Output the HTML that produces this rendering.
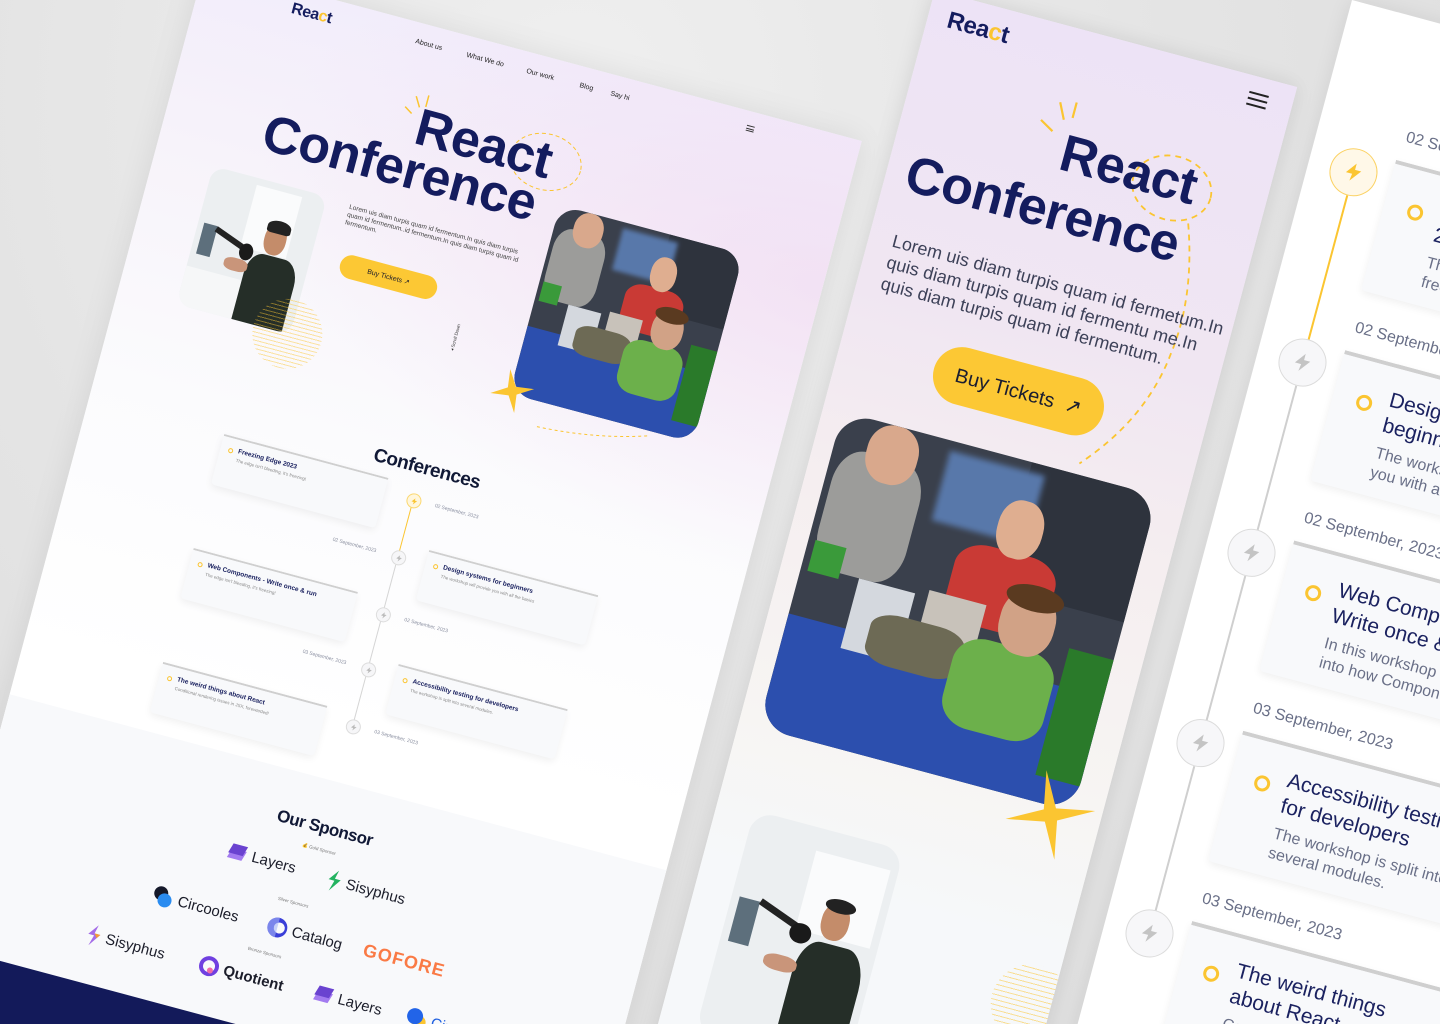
<!DOCTYPE html>
<html><head><meta charset="utf-8">
<style>
*{margin:0;padding:0;box-sizing:border-box}
html,body{width:1440px;height:1024px;overflow:hidden}
body{font-family:"Liberation Sans",sans-serif}
#wrap{position:absolute;left:0;top:0;width:1440px;height:1024px;overflow:hidden;background:radial-gradient(ellipse at 40% 10%,#efefef 0,#e4e4e4 50%,#dcdcdc 100%)}
.panel{position:absolute;transform-origin:0 0;transform:rotate(15deg);overflow:hidden}
.a{position:absolute}
.h{font-weight:bold;color:#141c5e;line-height:1;white-space:nowrap;letter-spacing:-0.5px}
.photo{position:absolute;overflow:hidden}
.photo div{position:absolute}
.crowd{background:#3a404c}
.speaker{background:#eceff1}
.btn{position:absolute;background:#fcc834;color:#1a1a2a;display:flex;align-items:center;justify-content:center;white-space:nowrap}
.card{position:absolute;background:#f8f9fb;border-top:2px solid #cfcfcf;box-shadow:0 3px 8px rgba(0,0,0,.06);border-radius:0 0 4px 4px}
.dot{position:absolute;border-radius:50%}
.ring{position:absolute;border-radius:50%;border:3px solid #fbc531}
.date{position:absolute;color:#8a8fa0;white-space:nowrap}
.tic{position:absolute;border-radius:50%;display:flex;align-items:center;justify-content:center}
.sp{position:absolute;display:flex;align-items:center;white-space:nowrap;color:#1b1d2a;font-weight:normal}
</style></head><body><div id="wrap">

<!-- LEFT DESKTOP PANEL -->
<div class="panel" style="left:205px;top:-35px;width:680px;height:1300px;background:linear-gradient(180deg,#f2edfb 0,#f7f3fa 180px,#fbfbfd 420px,#fff 700px);box-shadow:0 0 30px rgba(0,0,0,.08)">
  <div class="a" style="left:0;top:0;width:680px;height:500px;background:radial-gradient(ellipse at 100% 30%,rgba(240,215,240,.6),rgba(255,255,255,0) 60%)"></div>
  <div class="a" style="left:0;top:755px;width:680px;height:270px;background:#f8f9fb"></div>
  <div class="a" style="left:0;top:1015px;width:680px;height:300px;background:#131a5a"></div>

  <div class="a h" style="left:95px;top:12px;font-size:16px">Rea<span style="color:#fbc531">c</span>t</div>
  <div class="a" style="left:223px;top:16px;font-size:7px;color:#222;white-space:nowrap">About us</div>
  <div class="a" style="left:276px;top:16px;font-size:7px;color:#222;white-space:nowrap">What We do</div>
  <div class="a" style="left:338px;top:16px;font-size:7px;color:#222;white-space:nowrap">Our work</div>
  <div class="a" style="left:393px;top:16px;font-size:7px;color:#222;white-space:nowrap">Blog</div>
  <div class="a" style="left:425px;top:16px;font-size:7px;color:#222;white-space:nowrap">Say hi</div>
  <div class="a" style="left:565px;top:14px;width:8px;height:6px;border-top:1px solid #333;border-bottom:1px solid #333"><div class="a" style="left:0;top:2px;width:8px;height:1px;background:#333"></div></div>

  <svg class="a" style="left:220px;top:50px" width="200" height="110" viewBox="0 0 200 110">
    <path d="M10 35 L18 40 M18 22 L24 32 M30 18 L30 30" stroke="#fbc531" stroke-width="1.5" fill="none"/>
    <ellipse cx="160" cy="52" rx="36" ry="28" stroke="#fbc531" stroke-width="1" stroke-dasharray="4 3" fill="none"/>
  </svg>
  <div class="a h" style="left:246px;top:75px;font-size:52px">React</div>
  <div class="a h" style="left:100px;top:120px;font-size:52px">Conference</div>

  <div class="photo speaker" style="left:60px;top:192px;width:118px;height:143px;border-radius:14px">
    <div style="left:40%;top:5%;width:40%;height:45%;background:#fafbfc"></div>
    <div style="left:5%;top:40%;width:12%;height:22%;background:#5d6f7c"></div>
    <div style="left:15%;top:45%;width:35%;height:4%;background:#222;transform:rotate(20deg)"></div>
    <div style="left:40%;top:46%;width:12%;height:12%;background:#1a1a1a;border-radius:50%"></div>
    <div style="left:0;top:72%;width:55%;height:30%;background:#f6f7f8"></div>
    <div style="left:48%;top:50%;width:44%;height:55%;background:#252e28;border-radius:30% 30% 0 0"></div>
    <div style="left:58%;top:28%;width:18%;height:22%;background:#c48c6a;border-radius:45%"></div>
    <div style="left:58%;top:25%;width:20%;height:9%;background:#222;border-radius:50% 50% 20% 20%"></div>
    <div style="left:30%;top:58%;width:20%;height:9%;background:#c9957a;border-radius:40%"></div>
  </div>
  <div class="a" style="left:140px;top:300px;width:70px;height:70px;border-radius:50%;background:repeating-linear-gradient(0deg,rgba(251,197,49,.45) 0 1px,transparent 1px 4px);z-index:0"></div>

  <div class="a" style="left:202px;top:193px;width:190px;font-size:6.5px;line-height:8px;color:#444">Lorem uis diam turpis quam id fermentum.In quis diam turpis quam id fermentum..id fermentum.In quis diam turpis quam id fermentum.</div>
  <div class="btn" style="left:208px;top:242px;width:100px;height:24px;border-radius:12px;font-size:7px">Buy Tickets ↗</div>
  <div class="a" style="left:325px;top:292px;font-size:4.5px;color:#333;transform:rotate(-90deg);white-space:nowrap">◂ Scroll Down</div>

  <div class="photo crowd" style="left:405px;top:140px;width:190px;height:195px;border-radius:22px">
    <div style="left:60%;top:0;width:40%;height:40%;background:#2e333d"></div>
    <div style="left:35%;top:3%;width:30%;height:22%;background:#5878aa;filter:blur(2px)"></div>
    <div style="left:2%;top:10%;width:28%;height:38%;background:#9c9c9a;border-radius:30%"></div>
    <div style="left:10%;top:0;width:16%;height:18%;background:#d9a88c;border-radius:45%"></div>
    <div style="left:45%;top:28%;width:32%;height:25%;background:#c93a35;border-radius:30%"></div>
    <div style="left:55%;top:12%;width:14%;height:18%;background:#dfae90;border-radius:45%"></div>
    <div style="left:40%;top:46%;width:18%;height:14%;background:#c8c2ba"></div>
    <div style="left:0;top:64%;width:100%;height:40%;background:#2c4fae"></div>
    <div style="left:18%;top:48%;width:18%;height:22%;background:#d4d8de"></div>
    <div style="left:25%;top:56%;width:30%;height:16%;background:#6d6a55;border-radius:30%"></div>
    <div style="left:52%;top:56%;width:32%;height:28%;background:#6cb04b;border-radius:30%"></div>
    <div style="left:63%;top:38%;width:17%;height:20%;background:#d1a286;border-radius:45%"></div>
    <div style="left:63%;top:36%;width:18%;height:8%;background:#5a3a20;border-radius:50%"></div>
    <div style="left:86%;top:52%;width:14%;height:40%;background:#2a7a2a"></div>
    <div style="left:2%;top:40%;width:10%;height:10%;background:#3a9a3a"></div>
  </div>
  <svg class="a" style="left:385px;top:310px" width="44" height="44" viewBox="0 0 44 44"><path d="M22 0 L26 18 L44 22 L26 26 L22 44 L18 26 L0 22 L18 18 Z" fill="#fbc531" transform="rotate(-20 22 22)"/></svg>
  <svg class="a" style="left:440px;top:335px" width="120" height="30"><path d="M0 25 Q60 22 110 5" stroke="#fbc531" stroke-dasharray="3 3" fill="none"/></svg>

  <div class="a h" style="left:290px;top:420px;font-size:19px;color:#111936">Conferences</div>
  <div class="a" style="left:339px;top:470px;width:1px;height:50px;background:#fbc531"></div>
  <div class="a" style="left:339px;top:530px;width:1px;height:165px;background:#d5d5d5"></div>
  <div class="tic" style="left:333px;top:456px;width:15px;height:15px;background:#fff6dc;border:1px solid #fbd870"><svg width="8" height="8" viewBox="0 0 24 24"><path d="M13 2 4 14h7l-1 8 10-13h-7z" fill="#fbc531"/></svg></div>
  <div class="tic" style="left:333px;top:515px;width:15px;height:15px;background:#f6f6f8;border:1px solid #ddd"><svg width="8" height="8" viewBox="0 0 24 24"><path d="M13 2 4 14h7l-1 8 10-13h-7z" fill="#bbb"/></svg></div>
  <div class="tic" style="left:333px;top:574px;width:15px;height:15px;background:#f6f6f8;border:1px solid #ddd"><svg width="8" height="8" viewBox="0 0 24 24"><path d="M13 2 4 14h7l-1 8 10-13h-7z" fill="#bbb"/></svg></div>
  <div class="tic" style="left:333px;top:631px;width:15px;height:15px;background:#f6f6f8;border:1px solid #ddd"><svg width="8" height="8" viewBox="0 0 24 24"><path d="M13 2 4 14h7l-1 8 10-13h-7z" fill="#bbb"/></svg></div>
  <div class="tic" style="left:333px;top:690px;width:15px;height:15px;background:#f6f6f8;border:1px solid #ddd"><svg width="8" height="8" viewBox="0 0 24 24"><path d="M13 2 4 14h7l-1 8 10-13h-7z" fill="#bbb"/></svg></div>

  <div class="date" style="left:362px;top:460px;font-size:5px">02 September, 2023</div>
  <div class="date" style="left:272px;top:519px;font-size:5px">02 September, 2023</div>
  <div class="date" style="left:362px;top:578px;font-size:5px">02 September, 2023</div>
  <div class="date" style="left:272px;top:635px;font-size:5px">03 September, 2023</div>
  <div class="date" style="left:362px;top:694px;font-size:5px">03 September, 2023</div>

  <div class="card" style="left:140px;top:448px;width:170px;height:52px"><div class="dot" style="left:8px;top:10px;width:5px;height:5px;border:1.5px solid #fbc531"></div><div class="a" style="left:18px;top:8px;font-size:6.5px;font-weight:bold;color:#1b2260;white-space:nowrap">Freezing Edge 2023</div><div class="a" style="left:18px;top:18px;font-size:4.5px;color:#888;white-space:nowrap">The edge isn't bleeding, it's freezing!</div></div>
  <div class="card" style="left:368px;top:507px;width:175px;height:52px"><div class="dot" style="left:8px;top:10px;width:5px;height:5px;border:1.5px solid #fbc531"></div><div class="a" style="left:18px;top:8px;font-size:6.5px;font-weight:bold;color:#1b2260;white-space:nowrap">Design systems for beginners</div><div class="a" style="left:18px;top:18px;font-size:4.5px;color:#888;white-space:nowrap">The workshop will provide you with all the basics</div></div>
  <div class="card" style="left:140px;top:566px;width:170px;height:52px"><div class="dot" style="left:8px;top:10px;width:5px;height:5px;border:1.5px solid #fbc531"></div><div class="a" style="left:18px;top:8px;font-size:6.5px;font-weight:bold;color:#1b2260;white-space:nowrap">Web Components - Write once &amp; run</div><div class="a" style="left:18px;top:18px;font-size:4.5px;color:#888;white-space:nowrap">The edge isn't bleeding, it's freezing!</div></div>
  <div class="card" style="left:368px;top:625px;width:175px;height:52px"><div class="dot" style="left:8px;top:10px;width:5px;height:5px;border:1.5px solid #fbc531"></div><div class="a" style="left:18px;top:8px;font-size:6.5px;font-weight:bold;color:#1b2260;white-space:nowrap">Accessibility testing for developers</div><div class="a" style="left:18px;top:18px;font-size:4.5px;color:#888;white-space:nowrap">The workshop is split into several modules.</div></div>
  <div class="card" style="left:140px;top:684px;width:170px;height:52px"><div class="dot" style="left:8px;top:10px;width:5px;height:5px;border:1.5px solid #fbc531"></div><div class="a" style="left:18px;top:8px;font-size:6.5px;font-weight:bold;color:#1b2260;white-space:nowrap">The weird things about React</div><div class="a" style="left:18px;top:18px;font-size:4.5px;color:#888;white-space:nowrap">Conditional rendering issues in JSX, forewarded!</div></div>

  <div class="a h" style="left:290px;top:794px;font-size:17px;color:#111936">Our Sponsor</div>
  <div class="a" style="left:322px;top:822px;font-size:4.5px;color:#777;white-space:nowrap">💰 Gold Sponsor</div>
  <div class="a" style="left:312px;top:880px;font-size:4.5px;color:#777;white-space:nowrap">Silver Sponsors</div>
  <div class="a" style="left:296px;top:936px;font-size:4.5px;color:#777;white-space:nowrap">Bronze Sponsors</div>

  <div class="sp" style="left:250px;top:840px;font-size:15px"><svg width="22" height="18" viewBox="0 0 22 18"><path d="M5 6 L20 6 L17 16 L2 16Z" fill="#a37bf0"/><path d="M5 1 L20 1 L17 11 L2 11Z" fill="#6a43d0"/></svg>&nbsp;Layers</div>
  <div class="sp" style="left:354px;top:840px;font-size:15px"><svg width="16" height="22" viewBox="0 0 16 22"><path d="M10 0 L2 11 H8 L5 22 L14 9 H8 Z" fill="#22b360"/></svg>&nbsp;Sisyphus</div>
  <div class="sp" style="left:190px;top:900px;font-size:15px"><svg width="22" height="22" viewBox="0 0 22 22"><circle cx="8" cy="8" r="7" fill="#15192a"/><circle cx="13" cy="14" r="7" fill="#2a8cf0"/></svg>&nbsp;Circooles</div>
  <div class="sp" style="left:308px;top:900px;font-size:15px"><svg width="22" height="22" viewBox="0 0 22 22"><circle cx="11" cy="11" r="10" fill="#3a3fd8"/><circle cx="13" cy="11" r="5.5" fill="#f8f9fb"/><path d="M11 1 A10 10 0 0 0 11 21 Z" fill="#a6b6f8" opacity=".6"/></svg>&nbsp;Catalog</div>
  <div class="sp" style="left:408px;top:900px;font-size:18px;color:#fa7a45;letter-spacing:1px;font-weight:bold">GOFORE</div>
  <div class="sp" style="left:136px;top:955px;font-size:15px"><svg width="16" height="22" viewBox="0 0 16 22"><path d="M10 0 L2 11 H8 L5 22 L14 9 H8 Z" fill="#a46ce8"/><path d="M8 9 H14 L11 13 Z" fill="#f59a30"/></svg>&nbsp;Sisyphus</div>
  <div class="sp" style="left:252px;top:955px;font-size:15px;font-weight:bold"><svg width="22" height="22" viewBox="0 0 22 22"><circle cx="11" cy="11" r="8" fill="none" stroke="#7040e0" stroke-width="4"/><circle cx="13" cy="15" r="3" fill="#f06aa8"/></svg>&nbsp;Quotient</div>
  <div class="sp" style="left:370px;top:955px;font-size:15px"><svg width="22" height="18" viewBox="0 0 22 18"><path d="M5 6 L20 6 L17 16 L2 16Z" fill="#a37bf0"/><path d="M5 1 L20 1 L17 11 L2 11Z" fill="#6a43d0"/></svg>&nbsp;Layers</div>
  <div class="sp" style="left:466px;top:952px;font-size:15px;color:#2060e0"><svg width="22" height="22" viewBox="0 0 22 22"><circle cx="14" cy="14" r="7" fill="#fbc531"/><circle cx="9" cy="9" r="8" fill="#2264e8"/></svg>&nbsp;Circle</div>
</div>

<!-- MIDDLE MOBILE PANEL -->
<div class="panel" style="left:935px;top:-10px;width:375px;height:1200px;background:linear-gradient(180deg,#ede3f6 0,#f0e6f2 300px,#f5eef0 500px,#f7f5f3 750px,#f6f8fa 900px);box-shadow:0 0 20px rgba(0,0,0,.1)">
  <div class="a h" style="left:20px;top:14px;font-size:24px">Rea<span style="color:#fbc531">c</span>t</div>
  <div class="a" style="left:330px;top:16px;width:20px;height:14px;border-top:2px solid #222;border-bottom:2px solid #222"><div class="a" style="left:0;top:4px;width:20px;height:2px;background:#222"></div></div>
  <svg class="a" style="left:0;top:60px" width="375" height="400" viewBox="0 0 375 400">
    <path d="M136 38 L150 46 M150 16 L158 32 M166 12 L166 28" stroke="#fbc531" stroke-width="2.2" fill="none"/>
    <ellipse cx="280" cy="70" rx="40" ry="32" stroke="#fbc531" stroke-width="1.8" stroke-dasharray="6 5" fill="none"/>
    <path d="M305 100 Q330 170 322 230 Q315 300 262 360" stroke="#fbc531" stroke-width="1.8" stroke-dasharray="6 5" fill="none"/>
  </svg>
  <div class="a h" style="left:164px;top:98px;font-size:52px">React</div>
  <div class="a h" style="left:20px;top:158px;font-size:52px">Conference</div>
  <div class="a" style="left:24px;top:242px;width:360px;font-size:18px;line-height:22px;color:#3d4158;white-space:nowrap">Lorem uis diam turpis quam id fermetum.In<br>quis diam turpis quam id fermentu me.In<br>quis diam turpis quam id fermentum.</div>
  <div class="btn" style="left:97px;top:337px;width:175px;height:58px;border-radius:30px;font-size:20px;color:#1a1d30">Buy Tickets&nbsp;&nbsp;↗</div>

  <div class="photo crowd" style="left:20px;top:431px;width:326px;height:327px;border-radius:32px">
    <div style="left:60%;top:0;width:40%;height:40%;background:#2e333d"></div>
    <div style="left:35%;top:3%;width:30%;height:22%;background:#5878aa;filter:blur(3px)"></div>
    <div style="left:2%;top:10%;width:28%;height:38%;background:#9c9c9a;border-radius:30%"></div>
    <div style="left:10%;top:0;width:16%;height:18%;background:#d9a88c;border-radius:45%"></div>
    <div style="left:45%;top:28%;width:32%;height:25%;background:#c93a35;border-radius:30%"></div>
    <div style="left:55%;top:12%;width:14%;height:18%;background:#dfae90;border-radius:45%"></div>
    <div style="left:40%;top:46%;width:18%;height:14%;background:#c8c2ba"></div>
    <div style="left:0;top:64%;width:100%;height:40%;background:#2c4fae"></div>
    <div style="left:18%;top:48%;width:18%;height:22%;background:#d4d8de"></div>
    <div style="left:25%;top:56%;width:30%;height:16%;background:#6d6a55;border-radius:30%"></div>
    <div style="left:52%;top:56%;width:32%;height:28%;background:#6cb04b;border-radius:30%"></div>
    <div style="left:63%;top:38%;width:17%;height:20%;background:#d1a286;border-radius:45%"></div>
    <div style="left:63%;top:36%;width:18%;height:8%;background:#5a3a20;border-radius:50%"></div>
    <div style="left:86%;top:52%;width:14%;height:40%;background:#2a7a2a"></div>
    <div style="left:2%;top:40%;width:10%;height:10%;background:#3a9a3a"></div>
  </div>
  <svg class="a" style="left:280px;top:722px" width="90" height="90" viewBox="0 0 44 44"><path d="M22 0 L25 19 L44 22 L25 25 L22 44 L19 25 L0 22 L19 19 Z" fill="#fbc531" transform="rotate(-20 22 22)"/></svg>

  <div class="photo speaker" style="left:38px;top:839px;width:155px;height:230px;border-radius:22px">
    <div style="left:45%;top:10%;width:50%;height:35%;background:#fafbfc"></div>
    <div style="left:5%;top:38%;width:14%;height:20%;background:#5d6f7c"></div>
    <div style="left:18%;top:40%;width:35%;height:3%;background:#222;transform:rotate(20deg)"></div>
    <div style="left:42%;top:42%;width:14%;height:9%;background:#1a1a1a;border-radius:50%"></div>
    <div style="left:50%;top:48%;width:45%;height:55%;background:#252e28;border-radius:30% 30% 0 0"></div>
    <div style="left:60%;top:30%;width:18%;height:16%;background:#c48c6a;border-radius:45%"></div>
    <div style="left:60%;top:28%;width:20%;height:6%;background:#222;border-radius:50%"></div>
    <div style="left:30%;top:58%;width:22%;height:7%;background:#c9957a;border-radius:40%"></div>
  </div>
  <div class="a" style="left:315px;top:915px;width:80px;height:80px;border-radius:50%;background:repeating-linear-gradient(0deg,rgba(251,197,49,.5) 0 1px,transparent 1px 5px)"></div>
</div>

<!-- RIGHT PANEL -->
<div class="panel" style="left:1352px;top:0;width:620px;height:1200px;background:#fff;box-shadow:0 0 20px rgba(0,0,0,.08)">
  <div class="a" style="left:45px;top:190px;width:2px;height:150px;background:#fbc531"></div>
  <div class="a" style="left:45px;top:387px;width:1.5px;height:150px;background:#cfcfcf"></div>
  <div class="a" style="left:45px;top:584px;width:1.5px;height:150px;background:#cfcfcf"></div>
  <div class="a" style="left:45px;top:781px;width:1.5px;height:150px;background:#cfcfcf"></div>

  <div class="tic" style="left:22px;top:142px;width:48px;height:48px;background:#fff8e8;border:1.5px solid #fbd264"><svg width="22" height="22" viewBox="0 0 24 24"><path d="M13 2 4 14h7l-1 8 10-13h-7z" fill="#fbc531"/></svg></div>
  <div class="tic" style="left:22px;top:339px;width:48px;height:48px;background:#f7f7f9;border:1.5px solid #dcdcdc"><svg width="22" height="22" viewBox="0 0 24 24"><path d="M13 2 4 14h7l-1 8 10-13h-7z" fill="#c4c4c4"/></svg></div>
  <div class="tic" style="left:22px;top:536px;width:48px;height:48px;background:#f7f7f9;border:1.5px solid #dcdcdc"><svg width="22" height="22" viewBox="0 0 24 24"><path d="M13 2 4 14h7l-1 8 10-13h-7z" fill="#c4c4c4"/></svg></div>
  <div class="tic" style="left:22px;top:733px;width:48px;height:48px;background:#f7f7f9;border:1.5px solid #dcdcdc"><svg width="22" height="22" viewBox="0 0 24 24"><path d="M13 2 4 14h7l-1 8 10-13h-7z" fill="#c4c4c4"/></svg></div>
  <div class="tic" style="left:22px;top:930px;width:48px;height:48px;background:#f7f7f9;border:1.5px solid #dcdcdc"><svg width="22" height="22" viewBox="0 0 24 24"><path d="M13 2 4 14h7l-1 8 10-13h-7z" fill="#c4c4c4"/></svg></div>

  <div class="date" style="left:88px;top:110px;font-size:16px;color:#6a7088">02 September, 2023</div>
  <div class="date" style="left:88px;top:307px;font-size:16px;color:#6a7088">02 September, 2023</div>
  <div class="date" style="left:88px;top:504px;font-size:16px;color:#6a7088">02 September, 2023</div>
  <div class="date" style="left:88px;top:701px;font-size:16px;color:#6a7088">03 September, 2023</div>
  <div class="date" style="left:88px;top:898px;font-size:16px;color:#6a7088">03 September, 2023</div>

  <div class="card" style="left:84px;top:143px;width:500px;height:135px;border-top-width:4px">
    <div class="ring" style="left:24px;top:34px;width:16px;height:16px"></div>
    <div class="a" style="left:56px;top:20px;font-size:21px;line-height:26px;color:#1b2260;white-space:nowrap">Freezing Edge<br>2023</div>
    <div class="a" style="left:56px;top:78px;font-size:16px;line-height:20px;color:#6a7088;white-space:nowrap">The edge isn't bleeding,<br>freezing!</div></div>
  <div class="card" style="left:84px;top:340px;width:500px;height:135px;border-top-width:4px">
    <div class="ring" style="left:24px;top:34px;width:16px;height:16px"></div>
    <div class="a" style="left:56px;top:20px;font-size:21px;line-height:26px;color:#1b2260;white-space:nowrap">Design systems for<br>beginners</div>
    <div class="a" style="left:56px;top:78px;font-size:16px;line-height:20px;color:#6a7088;white-space:nowrap">The workshop will provide<br>you with all the basics</div></div>
  <div class="card" style="left:84px;top:537px;width:500px;height:135px;border-top-width:4px">
    <div class="ring" style="left:24px;top:34px;width:16px;height:16px"></div>
    <div class="a" style="left:56px;top:20px;font-size:21px;line-height:26px;color:#1b2260;white-space:nowrap">Web Components -<br>Write once &amp; run</div>
    <div class="a" style="left:56px;top:78px;font-size:16px;line-height:20px;color:#6a7088;white-space:nowrap">In this workshop we'll dive<br>into how Components work</div></div>
  <div class="card" style="left:84px;top:734px;width:500px;height:135px;border-top-width:4px">
    <div class="ring" style="left:24px;top:34px;width:16px;height:16px"></div>
    <div class="a" style="left:56px;top:20px;font-size:21px;line-height:26px;color:#1b2260;white-space:nowrap">Accessibility testing<br>for developers</div>
    <div class="a" style="left:56px;top:78px;font-size:16px;line-height:20px;color:#6a7088;white-space:nowrap">The workshop is split into<br>several modules.</div></div>
  <div class="card" style="left:84px;top:931px;width:500px;height:135px;border-top-width:4px">
    <div class="ring" style="left:24px;top:34px;width:16px;height:16px"></div>
    <div class="a" style="left:56px;top:20px;font-size:21px;line-height:26px;color:#1b2260;white-space:nowrap">The weird things<br>about React</div>
    <div class="a" style="left:56px;top:78px;font-size:16px;line-height:20px;color:#6a7088;white-space:nowrap">Conditional rendering<br>issues in JSX</div></div>
</div>
</div></body></html>
